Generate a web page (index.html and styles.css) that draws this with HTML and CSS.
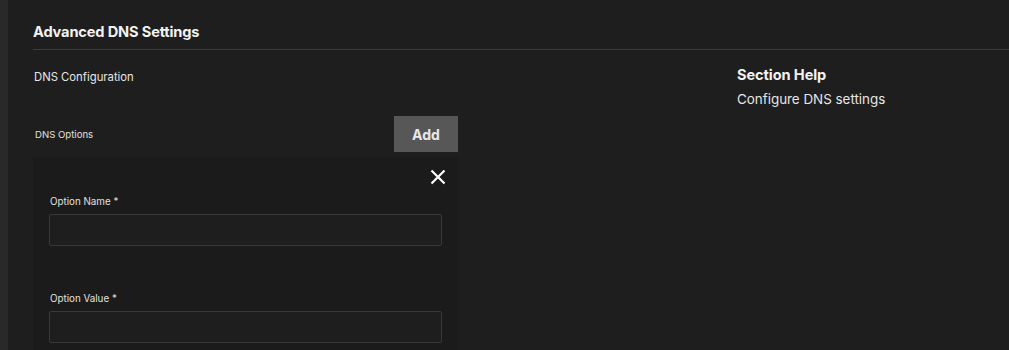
FILE: index.html
```html
<html>
<head>
  <meta charset="utf-8">
  <link rel="stylesheet" href="styles.css">
</head>
<body>
  <div id="app">
    <div class="rail"></div>
    <div class="main">
      <div class="section-head">
        <h3 class="section-title">Advanced DNS Settings</h3>
      </div>
      <div class="section-body">
        <div class="form-col">
          <div class="group-title">DNS Configuration</div>
          <div class="list-head">
            <span class="list-label">DNS Options</span>
            <button class="btn-add">Add</button>
          </div>
          <div class="list-item">
            <div class="item-tools">
              <button class="btn-close" title="Remove">
                <svg width="16" height="16" viewBox="0 0 16 16">
                  <path d="M1.5 1.5 L14.5 14.5 M14.5 1.5 L1.5 14.5" stroke="#fff" stroke-width="2.2" fill="none"/>
                </svg>
              </button>
            </div>
            <div class="field">
              <label class="field-label">Option Name *</label>
              <input class="field-input" type="text">
            </div>
            <div class="field">
              <label class="field-label">Option Value *</label>
              <input class="field-input" type="text">
            </div>
          </div>
        </div>
        <div class="help-col">
          <div class="help-title">Section Help</div>
          <div class="help-text">Configure DNS settings</div>
        </div>
      </div>
    </div>
  </div>
</body>
</html>
```

FILE: styles.css
```css
*, *:before, *:after { box-sizing: border-box; }
html, body { height: 100%; }
body {
  margin: 0;
  padding: 0;
  background-color: #1e1e1e;
  color: #e6e6e6;
  font-family: Inter, "Noto Sans", sans-serif;
  overflow: hidden;
}
#app { display: flex; height: 100%; }
.rail { flex: 0 0 8px; background-color: #292929; }
.main { flex: 1; padding-left: 25px; }

/* header */
.section-head {
  height: 50px;
  padding-top: 22px;
  border-bottom: 1px solid #3c3c3c;
}
.section-title {
  margin: 0;
  font-size: 14.6px;
  line-height: 20px;
  font-weight: 700;
  color: #f2f2f2;
  letter-spacing: -0.15px;
}

.section-body { display: flex; }
.form-col { flex: 0 0 425px; }
.help-col { margin-left: 279px; padding-top: 15px; }

.group-title {
  font-size: 11.3px;
  line-height: 16px;
  padding: 19px 0 0 1px;
  color: #e6e6e6;
}

/* list */
.list-head {
  display: flex;
  align-items: center;
  justify-content: space-between;
  margin-top: 31px;
}
.list-label { font-size: 9.6px; padding-left: 2px; color: #e0e0e0; }
.btn-add {
  width: 64px;
  height: 36px;
  border: 0;
  background-color: #575757;
  color: #e8e8e8;
  font-family: inherit;
  font-size: 14px;
  font-weight: 700;
  padding: 0;
}
.list-item {
  margin-top: 5px;
  background-color: #1b1b1b;
  padding: 10px 16px 20px 16px;
}
.item-tools { display: flex; justify-content: flex-end; margin-right: -8px; }
.btn-close {
  width: 24px;
  height: 20px;
  border: 0;
  padding: 0;
  background: transparent;
  display: flex;
  align-items: center;
  justify-content: center;
}

.field { margin-bottom: 46px; }
.field-label {
  display: block;
  font-size: 9.8px;
  line-height: 14px;
  padding-left: 1px;
  color: #e0e0e0;
  margin-top: 8px;
}
.field-input {
  display: block;
  width: 393px;
  height: 32px;
  margin-top: 5px;
  background-color: #1e1e1e;
  border: 1px solid #383838;
  border-radius: 2px;
  color: #e6e6e6;
}

/* help */
.help-title { font-size: 14.6px; font-weight: 700; line-height: 20px; color: #f2f2f2; letter-spacing: -0.1px; }
.help-text { font-size: 13.4px; line-height: 18px; margin-top: 5px; color: #e6e6e6; }
```
